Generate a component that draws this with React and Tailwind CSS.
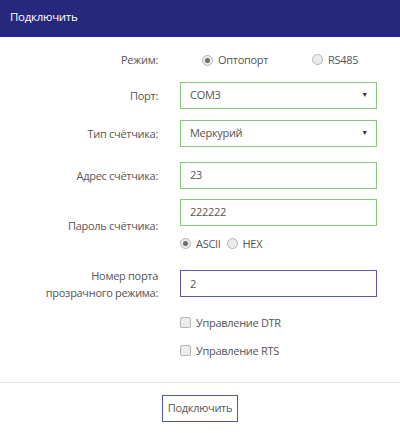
import React from "react";

const FONT = { fontFamily: '"Open Sans", "Noto Sans", sans-serif', letterSpacing: "-0.3px" };

function Radio({ checked, label }) {
    return (
        <span className="inline-flex items-center gap-[5px]">
            <span className="flex h-[11px] w-[11px] items-center justify-center rounded-full border border-[#b5b5b5] bg-[#ececec]">
                {checked && <span className="h-[5px] w-[5px] rounded-full bg-[#6e6e6e]" />}
            </span>
            <span>{label}</span>
        </span>
    );
}

function Check({ label }) {
    return (
        <div className="flex items-center gap-[5px]">
            <span className="h-[11px] w-[11px] rounded-[2px] border border-[#b5b5b5] bg-[#ececec]" />
            <span>{label}</span>
        </div>
    );
}

function Row({ label, children, className = "" }) {
    return (
        <div className={`flex items-center ${className}`}>
            <div className="w-[158px] shrink-0 text-right leading-[17px]">{label}</div>
            <div className="ml-[22px] w-[197px]">{children}</div>
        </div>
    );
}

function Field({ value, select, focus }) {
    return (
        <div className={`flex h-[27px] items-center justify-between border pl-[9px] pr-[8px] ${focus ? "border-[#5b5bab]" : "border-[#86c978]"}`}>
            <span>{value}</span>
            {select && <span className="text-[7px] text-[#333]">▼</span>}
        </div>
    );
}

export default function App() {
    return (
        <div className="h-[433px] w-[400px] bg-white text-[11px] text-[#555]" style={FONT}>
            <div className="flex h-[37px] items-center border-b-2 border-[#2323a6] bg-[#27277c] px-[10px] pb-[1px] text-[11.5px] text-white">Подключить</div>

            <div className="pt-[14px]">
                <Row label="Режим:">
                    <div className="flex items-center pl-[22px]">
                        <span className="w-[110px]"><Radio checked label="Оптопорт" /></span>
                        <Radio label="RS485" />
                    </div>
                </Row>
                <Row label="Порт:" className="mt-[13px]">
                    <Field value="COM3" select />
                </Row>
                <Row label="Тип счётчика:" className="mt-[11px]">
                    <Field value="Меркурий" select />
                </Row>
                <Row label="Адрес счётчика:" className="mt-[15px]">
                    <Field value="23" />
                </Row>
                <Row label="Пароль счётчика:" className="mt-[10px]">
                    <Field value="222222" />
                    <div className="mt-[9px] flex items-center gap-[6px] leading-[17px]">
                        <Radio checked label="ASCII" />
                        <Radio label="HEX" />
                    </div>
                </Row>
                <Row label={<>Номер порта<br />прозрачного режима:</>} className="mt-[15px]">
                    <Field value="2" focus />
                </Row>
                <div className="ml-[180px] mt-[13px] flex flex-col gap-[11px] leading-[17px]">
                    <Check label="Управление DTR" />
                    <Check label="Управление RTS" />
                </div>
            </div>

            <div className="mt-[23px] flex justify-center border-t border-[#e5e5e5] pt-[12px]">
                <button className="h-[27px] border border-[#5353a8] px-[5px] text-[11px] text-[#555]">Подключить</button>
            </div>
        </div>
    );
}
